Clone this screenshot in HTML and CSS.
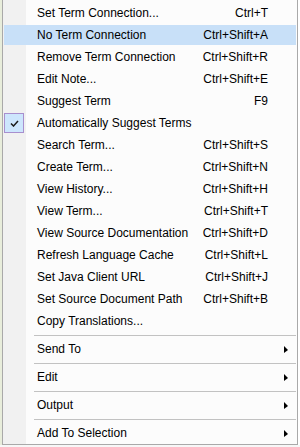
FILE: index.html
```html
<!DOCTYPE html>
<html lang="en">
<head>
  <meta charset="UTF-8" />
  <title>Term menu</title>
  <link rel="stylesheet" href="styles.css">
</head>
<body>
  <div class="screen">
    <div class="edge"></div>
    <div class="menu">
      <div class="item"><span class="icon"></span><span class="label">Set Term Connection...</span><span class="key">Ctrl+T</span><span class="sub"></span></div>
      <div class="item active"><span class="icon"></span><span class="label">No Term Connection</span><span class="key">Ctrl+Shift+A</span><span class="sub"></span></div>
      <div class="item"><span class="icon"></span><span class="label">Remove Term Connection</span><span class="key">Ctrl+Shift+R</span><span class="sub"></span></div>
      <div class="item"><span class="icon"></span><span class="label">Edit Note...</span><span class="key">Ctrl+Shift+E</span><span class="sub"></span></div>
      <div class="item"><span class="icon"></span><span class="label">Suggest Term</span><span class="key">F9</span><span class="sub"></span></div>
      <div class="item">
        <span class="icon checked">
          <svg width="9" height="7" viewBox="0 0 9 7"><path d="M1 3.5 L3.5 6 L8 1" stroke="#1b1b1b" stroke-width="1.5" fill="none"/></svg>
        </span>
        <span class="label">Automatically Suggest Terms</span><span class="key"></span><span class="sub"></span>
      </div>
      <div class="item"><span class="icon"></span><span class="label">Search Term...</span><span class="key">Ctrl+Shift+S</span><span class="sub"></span></div>
      <div class="item"><span class="icon"></span><span class="label">Create Term...</span><span class="key">Ctrl+Shift+N</span><span class="sub"></span></div>
      <div class="item"><span class="icon"></span><span class="label">View History...</span><span class="key">Ctrl+Shift+H</span><span class="sub"></span></div>
      <div class="item"><span class="icon"></span><span class="label">View Term...</span><span class="key">Ctrl+Shift+T</span><span class="sub"></span></div>
      <div class="item"><span class="icon"></span><span class="label">View Source Documentation</span><span class="key">Ctrl+Shift+D</span><span class="sub"></span></div>
      <div class="item"><span class="icon"></span><span class="label">Refresh Language Cache</span><span class="key">Ctrl+Shift+L</span><span class="sub"></span></div>
      <div class="item"><span class="icon"></span><span class="label">Set Java Client URL</span><span class="key">Ctrl+Shift+J</span><span class="sub"></span></div>
      <div class="item"><span class="icon"></span><span class="label">Set Source Document Path</span><span class="key">Ctrl+Shift+B</span><span class="sub"></span></div>
      <div class="item"><span class="icon"></span><span class="label">Copy Translations...</span><span class="key"></span><span class="sub"></span></div>
      <div class="sep"></div>
      <div class="item"><span class="icon"></span><span class="label">Send To</span><span class="key"></span><span class="sub"><i class="arrow"></i></span></div>
      <div class="sep"></div>
      <div class="item"><span class="icon"></span><span class="label">Edit</span><span class="key"></span><span class="sub"><i class="arrow"></i></span></div>
      <div class="sep"></div>
      <div class="item"><span class="icon"></span><span class="label">Output</span><span class="key"></span><span class="sub"><i class="arrow"></i></span></div>
      <div class="sep"></div>
      <div class="item"><span class="icon"></span><span class="label">Add To Selection</span><span class="key"></span><span class="sub"><i class="arrow"></i></span></div>
    </div>
  </div>
  <div class="floor"></div>
</body>
</html>
```

FILE: styles.css
```css
html, body {
  margin: 0;
  padding: 0;
  background: #ffffff;
  width: 300px;
  height: 447px;
  overflow: hidden;
}

.screen {
  display: flex;
  align-items: flex-start;
}

.edge {
  width: 2px;
  height: 445px;
  background: #e8eddb;
}

.menu {
  display: flex;
  flex-direction: column;
  width: 292px;
  padding: 2px 1px 0 1px;
  border: 1px solid #a9a9a9;
  border-top: none;
  background: linear-gradient(to right, #f1f1f1 0, #f1f1f1 23px, #fcfcfc 23px);
  font-family: "Liberation Sans", Arial, sans-serif;
  font-size: 12px;
  color: #000;
}

.item {
  display: flex;
  align-items: center;
  height: 20px;
  line-height: 20px;
  margin: 1px 0;
  padding-right: 8px;
  white-space: nowrap;
}

.item.active {
  background: #c8e0f8;
}

.icon {
  width: 20px;
  height: 20px;
  box-sizing: border-box;
  display: flex;
  align-items: center;
  justify-content: center;
}

.icon.checked {
  background: #cde6fd;
  border: 1px solid #a88fce;
}

.label {
  flex: 1;
  margin-left: 13px;
}

.key {
  text-align: right;
}

.sub {
  width: 20px;
  height: 20px;
  display: flex;
  align-items: center;
  justify-content: flex-end;
}

.arrow {
  display: block;
  width: 0;
  height: 0;
  border-top: 4px solid transparent;
  border-bottom: 3px solid transparent;
  border-left: 4px solid #000;
}

.sep {
  height: 1px;
  margin: 3px 0 2px 30px;
  background: #c2c2c2;
}

.floor {
  height: 2px;
  background: #f7f7f7;
}
```
